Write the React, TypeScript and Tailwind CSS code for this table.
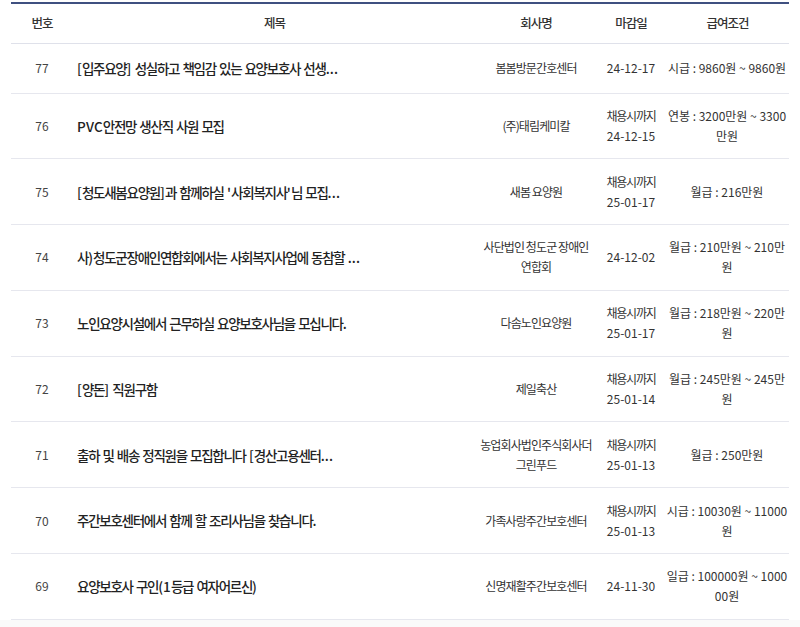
import React from "react";

type Row = {
  no: number;
  title: string;
  company: string;
  keep?: boolean;
  deadline: string[];
  salary: string;
};

const rows: Row[] = [
  { no: 77, title: "[입주요양] 성실하고 책임감 있는 요양보호사 선생...", company: "봄봄방문간호센터", deadline: ["24-12-17"], salary: "시급 : 9860원 ~ 9860원" },
  { no: 76, title: "PVC안전망 생산직 사원 모집", company: "(주)태림케미칼", deadline: ["채용시까지", "24-12-15"], salary: "연봉 : 3200만원 ~ 3300만원" },
  { no: 75, title: "[청도새봄요양원]과 함께하실 '사회복지사'님 모집...", company: "새봄 요양원", deadline: ["채용시까지", "25-01-17"], salary: "월급 : 216만원" },
  { no: 74, title: "사)청도군장애인연합회에서는 사회복지사업에 동참할 ...", company: "사단법인 청도군 장애인 연합회", keep: true, deadline: ["24-12-02"], salary: "월급 : 210만원 ~ 210만원" },
  { no: 73, title: "노인요양시설에서 근무하실 요양보호사님을 모십니다.", company: "다솜노인요양원", deadline: ["채용시까지", "25-01-17"], salary: "월급 : 218만원 ~ 220만원" },
  { no: 72, title: "[양돈] 직원구함", company: "제일축산", deadline: ["채용시까지", "25-01-14"], salary: "월급 : 245만원 ~ 245만원" },
  { no: 71, title: "출하 및 배송 정직원을 모집합니다 [경산고용센터...", company: "농업회사법인주식회사더그린푸드", deadline: ["채용시까지", "25-01-13"], salary: "월급 : 250만원" },
  { no: 70, title: "주간보호센터에서 함께 할 조리사님을 찾습니다.", company: "가족사랑주간보호센터", deadline: ["채용시까지", "25-01-13"], salary: "시급 : 10030원 ~ 11000원" },
  { no: 69, title: "요양보호사 구인(1등급 여자어르신)", company: "신명재활주간보호센터", deadline: ["24-11-30"], salary: "일급 : 100000원 ~ 100000원" },
];

// Split single-line text into Hangul runs and other runs so that Hangul can be set narrower.
function Txt({ text, k, o }: { text: string; k: string; o: string }) {
  const parts = text.match(/[\uAC00-\uD7A3]+|[^\uAC00-\uD7A3]+/g) || [];
  return (
    <>
      {parts.map((p, i) =>
        /[\uAC00-\uD7A3]/.test(p) ? (
          <span key={i} className={k}>
            {p}
          </span>
        ) : (
          <span key={i} className={o}>
            {p}
          </span>
        )
      )}
    </>
  );
}

export default function App() {
  return (
    <div
      className="w-[800px] h-[627px] bg-[#fafafa] overflow-hidden"
      style={{ fontFamily: '"Noto Sans CJK KR", "Noto Sans", sans-serif' }}
    >
      <div className="bg-white pl-[11px] pr-[11px] pt-[2px]">
        <table className="w-full table-fixed border-collapse border-t-2 border-[#3f5080]">
          <colgroup>
            <col className="w-[62px]" />
            <col className="w-[403px]" />
            <col className="w-[120px]" />
            <col className="w-[70px]" />
            <col className="w-[123px]" />
          </colgroup>
          <thead>
            <tr className="h-[40px] border-b border-[#dfe1ea] text-[12.5px] text-[#333] tracking-[-0.08em]">
              <th className="font-medium">번호</th>
              <th className="font-medium">제목</th>
              <th className="font-medium">회사명</th>
              <th className="font-medium">마감일</th>
              <th className="font-medium">급여조건</th>
            </tr>
          </thead>
          <tbody>
            {rows.map((r) => (
              <tr key={r.no} className="border-b border-[#e6e7ee]">
                <td className="h-[50px] py-[12.4px] text-center text-[12px] text-[#444]">{r.no}</td>
                <td className="py-[12.4px] pl-[4px] text-[13.5px] font-medium text-[#222] whitespace-nowrap overflow-hidden">
                  <Txt text={r.title} k="tracking-[-0.095em]" o="tracking-[0.01em]" />
                </td>
                <td
                  className={
                    r.keep
                      ? "py-[12.4px] px-0 text-center text-[12px] leading-5 text-[#333] tracking-[-0.075em] break-keep"
                      : "py-[12.4px] px-0 text-center text-[12px] leading-5 text-[#333] tracking-[-0.075em]"
                  }
                >
                  {r.company}
                </td>
                <td className="py-[12.4px] text-center text-[12px] leading-5 text-[#333]">
                  {r.deadline.map((d) =>
                    /[\uAC00-\uD7A3]/.test(d) ? (
                      <div key={d} className="tracking-[-0.1em]">{d}</div>
                    ) : (
                      <div key={d}>{d}</div>
                    )
                  )}
                </td>
                <td className="py-[12.4px] pr-[1px] text-center text-[12px] leading-5 text-[#333] break-all">
                  {r.salary}
                </td>
              </tr>
            ))}
          </tbody>
        </table>
      </div>
    </div>
  );
}
